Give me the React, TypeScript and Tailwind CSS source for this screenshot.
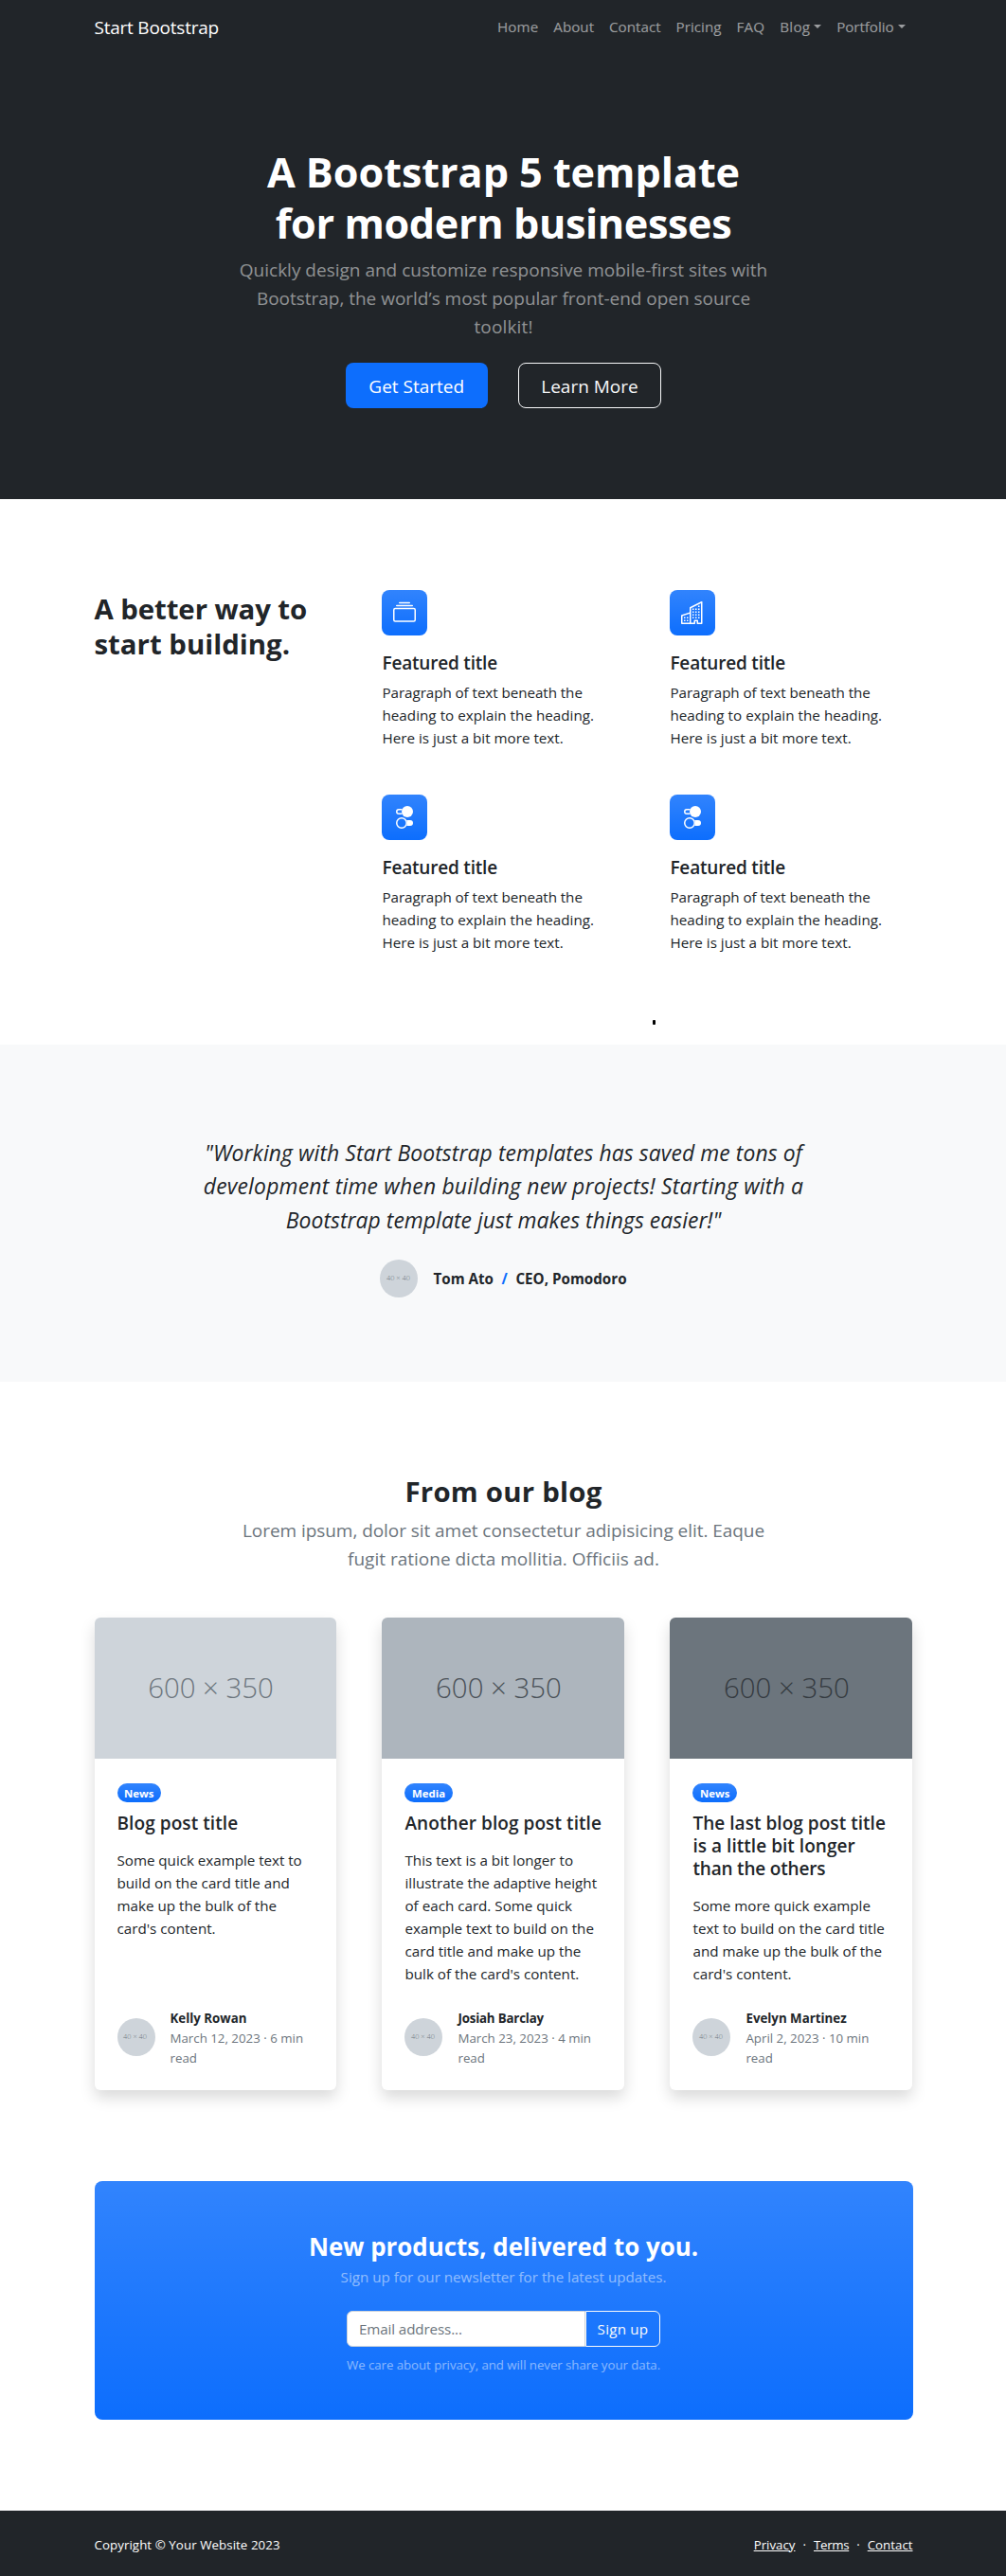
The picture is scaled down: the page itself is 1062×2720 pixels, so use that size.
import React from 'react';
import { BsCollection, BsToggles2 } from 'react-icons/bs';

type Line = [text: string, tracking?: string];

/** Copy set line by line, each with its own tracking. */
function Lines({ lines }: { lines: Line[] }) {
  return (
    <>
      {lines.map(([text, tracking = ''], i) => (
        <span key={i} className={`block whitespace-nowrap ${tracking}`}>
          {text}
        </span>
      ))}
    </>
  );
}

function BuildingIcon() {
  return (
    <svg viewBox="0 0 16 16" className="size-6" fill="currentColor" fillRule="evenodd">
      <path d="M14.763.075A.5.5 0 0 1 15 .5v15a.5.5 0 0 1-.5.5h-3a.5.5 0 0 1-.5-.5V14h-1v1.5a.5.5 0 0 1-.5.5h-9a.5.5 0 0 1-.5-.5V10a.5.5 0 0 1 .342-.474L6 7.64V4.5a.5.5 0 0 1 .276-.447l8-4a.5.5 0 0 1 .487.022zM6 8.694 1 10.36V15h5V8.694zM7 15h2v-1.5a.5.5 0 0 1 .5-.5h2a.5.5 0 0 1 .5.5V15h2V1.309l-7 3.5V15z" />
      <path d="M2 11h1v1H2v-1zm2 0h1v1H4v-1zm-2 2h1v1H2v-1zm2 0h1v1H4v-1zm4-4h1v1H8V9zm2 0h1v1h-1V9zm-2 2h1v1H8v-1zm2 0h1v1h-1v-1zm2-2h1v1h-1V9zm0 2h1v1h-1v-1zM8 7h1v1H8V7zm2 0h1v1h-1V7zm2 0h1v1h-1V7zM8 5h1v1H8V5zm2 0h1v1h-1V5zm2 0h1v1h-1V5zm0-2h1v1h-1V3z" />
    </svg>
  );
}

const navLinks: { label: string; menu?: boolean; tracking: string }[] = [
  { label: 'Home', tracking: 'tracking-[0.005em]' },
  { label: 'About', tracking: '' },
  { label: 'Contact', tracking: '' },
  { label: 'Pricing', tracking: '' },
  { label: 'FAQ', tracking: 'tracking-[0.012em]' },
  { label: 'Blog', menu: true, tracking: 'tracking-[0.015em]' },
  { label: 'Portfolio', menu: true, tracking: 'tracking-[-0.005em]' },
];

function Navbar() {
  return (
    <nav className="ml-[99.5px] flex h-14 w-[864px] items-center justify-between">
      <a href="#" className="pt-[1.5px] text-[19px] leading-[30px] tracking-[-0.012em] text-white">
        Start Bootstrap
      </a>
      <ul className="flex text-[15.2px] leading-6 text-white/55">
        {navLinks.map((l) => (
          <li key={l.label} className="flex items-center px-2">
            <span className={l.tracking}>{l.label}</span>
            {l.menu && (
              <span className="ml-1 border-x-[4.8px] border-t-[4.8px] border-x-transparent border-t-white/55" />
            )}
          </li>
        ))}
      </ul>
    </nav>
  );
}

function Hero() {
  return (
    <div className="ml-[99.5px] flex h-[471px] w-[864px] flex-col items-center pt-24 text-center">
      <h1 className="mb-2 pt-[2.5px] text-[43.2px] leading-[54.55px] font-bold text-white">
        <Lines
          lines={[
            ['A Bootstrap 5 template', 'tracking-[-0.001em]'],
            ['for modern businesses', 'tracking-[-0.009em]'],
          ]}
        />
      </h1>
      <p className="-mt-[1.5px] mb-[23px] text-[19px] leading-[30px] text-white/50">
        <Lines
          lines={[
            ['Quickly design and customize responsive mobile-first sites with'],
            ['Bootstrap, the world’s most popular front-end open source', 'tracking-[-0.001em]'],
            ['toolkit!', 'tracking-[0.008em]'],
          ]}
        />
      </p>
      <div className="flex gap-8 text-[19px] leading-[30px] text-white">
        <a href="#" className="h-12 w-[150px] rounded-lg bg-[#0d6efd] pt-2.5">
          Get Started
        </a>
        <a href="#" className="h-12 w-[151.5px] rounded-lg border border-[#f8f9fa] pt-[9px] text-[#f8f9fa]">
          Learn More
        </a>
      </div>
    </div>
  );
}

function Feature({ icon }: { icon: React.ReactNode }) {
  return (
    <div className="w-[255.98px]">
      <div className="mb-4 flex size-12 items-center justify-center rounded-lg bg-[#0d6efd] bg-linear-to-b from-white/15 to-white/0 text-white">
        {icon}
      </div>
      <h2 className="mb-[7px] pt-px text-[19px] leading-6 font-semibold tracking-[-0.01em]">Featured title</h2>
      <p className="text-[15.2px] leading-6">
        <Lines
          lines={[
            ['Paragraph of text beneath the', 'tracking-[-0.004em]'],
            ['heading to explain the heading.', 'tracking-[0.002em]'],
            ['Here is just a bit more text.'],
          ]}
        />
      </p>
    </div>
  );
}

function Features() {
  return (
    <section className="ml-[99.5px] flex h-[576px] w-[864px] gap-12 pt-24">
      <h2 className="w-[255.98px] pt-[1.5px] text-[29.4px] leading-[37.1px] font-bold">
        <Lines lines={[['A better way to', 'tracking-[-0.003em]'], ['start building.']]} />
      </h2>
      <div>
        <div className="flex w-[560px] flex-wrap gap-12">
          <Feature icon={<BsCollection className="size-6" />} />
          <Feature icon={<BuildingIcon />} />
          <Feature icon={<BsToggles2 className="size-6" />} />
          <Feature icon={<BsToggles2 className="size-6" />} />
        </div>
        <div className="mt-[70px] ml-[285.52px] h-[5px] w-[3px] rounded-[1px] bg-black" />
      </div>
    </section>
  );
}

function Avatar() {
  return (
    <div className="flex size-10 shrink-0 items-center justify-center rounded-full bg-[#ced4da] pr-[2px] text-[7.4px] leading-none font-light whitespace-nowrap text-[#6c757d]">
      40 × 40
    </div>
  );
}

function Testimonial() {
  return (
    <section className="h-[356px] bg-[#f8f9fa] pt-24">
      <div className="ml-[99.5px] flex w-[864px] flex-col items-center">
        <p className="mb-[23.5px] pt-px text-center text-[22.9px] leading-[35.46px] italic">
          <Lines
            lines={[
              ['"Working with Start Bootstrap templates has saved me tons of', 'tracking-[0.004em]'],
              ['development time when building new projects! Starting with a', 'tracking-[0.009em]'],
              ['Bootstrap template just makes things easier!"', 'tracking-[0.002em]'],
            ]}
          />
        </p>
        <div className="flex items-center gap-4">
          <Avatar />
          <div className="pt-px text-[15.2px] leading-6 font-bold whitespace-nowrap">
            Tom Ato
            <span className="mx-[8.6px] text-[#0d6efd]">/</span>
            CEO, Pomodoro
          </div>
        </div>
      </div>
    </section>
  );
}

interface Post {
  tone: string;
  tag: string;
  title: Line[];
  body: Line[];
  author: string;
  authorTracking: string;
  date: string;
}

const posts: Post[] = [
  {
    tone: 'bg-[#ced4da] text-[#6c757d]',
    tag: 'News',
    title: [['Blog post title', 'tracking-[0.004em]']],
    body: [
      ['Some quick example text to', 'tracking-[-0.002em]'],
      ['build on the card title and'],
      ['make up the bulk of the'],
      ["card's content."],
    ],
    author: 'Kelly Rowan',
    authorTracking: '',
    date: 'March 12, 2023 · 6 min',
  },
  {
    tone: 'bg-[#adb5bd] text-[#495057]',
    tag: 'Media',
    title: [['Another blog post title', 'tracking-[0.004em]']],
    body: [
      ['This text is a bit longer to'],
      ['illustrate the adaptive height'],
      ['of each card. Some quick'],
      ['example text to build on the'],
      ['card title and make up the'],
      ["bulk of the card's content."],
    ],
    author: 'Josiah Barclay',
    authorTracking: 'tracking-[-0.014em]',
    date: 'March 23, 2023 · 4 min',
  },
  {
    tone: 'bg-[#6c757d] text-[#343a40]',
    tag: 'News',
    title: [
      ['The last blog post title', 'tracking-[0.002em]'],
      ['is a little bit longer', 'tracking-[0.002em]'],
      ['than the others', 'tracking-[-0.01em]'],
    ],
    body: [
      ['Some more quick example', 'tracking-[-0.002em]'],
      ['text to build on the card title', 'tracking-[0.003em]'],
      ['and make up the bulk of the'],
      ["card's content."],
    ],
    author: 'Evelyn Martinez',
    authorTracking: '',
    date: 'April 2, 2023 · 10 min',
  },
];

function PostCard({ post }: { post: Post }) {
  return (
    <article className="flex h-[499px] w-[255.98px] flex-col rounded-md bg-white shadow-[0_8px_16px_rgba(0,0,0,0.15)]">
      <div
        className={`flex h-[149.3px] items-center justify-center rounded-t-md pr-2.5 text-[29.4px] font-light whitespace-nowrap ${post.tone}`}
      >
        600 × 350
      </div>
      <div className="flex flex-1 flex-col items-start px-6 pt-[26.5px] pb-6">
        <span className="mb-2 h-[19.8px] rounded-full bg-[#0d6efd] bg-linear-to-b from-white/15 to-white/0 px-[7.6px] pt-[4.8px] text-[11.4px] leading-3 font-bold text-white">
          {post.tag}
        </span>
        <h3 className="mb-[14.5px] pt-[1.5px] text-[19px] leading-6 font-semibold">
          <Lines lines={post.title} />
        </h3>
        <p className="pt-[0.6px] text-[15.2px] leading-6">
          <Lines lines={post.body} />
        </p>
        <div className="mt-auto flex items-center gap-4 text-[13.3px] leading-[21px]">
          <div className="pt-px">
            <Avatar />
          </div>
          <div className="-mb-px pt-0.5">
            <div className={`font-bold whitespace-nowrap ${post.authorTracking}`}>{post.author}</div>
            <div className="text-[#6c757d]">
              <Lines lines={[[post.date], ['read']]} />
            </div>
          </div>
        </div>
      </div>
    </article>
  );
}

function Blog() {
  return (
    <section className="ml-[99.5px] w-[864px] pt-24 pb-24">
      <div className="mb-[47px] text-center">
        <h2 className="mb-[7px] pt-[1.5px] text-[29.4px] leading-[37.1px] font-bold tracking-[0.008em]">
          From our blog
        </h2>
        <p className="text-[19px] leading-[30px] text-[#6c757d]">
          <Lines
            lines={[
              ['Lorem ipsum, dolor sit amet consectetur adipisicing elit. Eaque', 'tracking-[-0.003em]'],
              ['fugit ratione dicta mollitia. Officiis ad.'],
            ]}
          />
        </p>
      </div>
      <div className="flex gap-12">
        {posts.map((p) => (
          <PostCard key={p.author} post={p} />
        ))}
      </div>
      <aside className="mt-24 flex h-[252px] flex-col items-center rounded-lg bg-[#0d6efd] bg-linear-to-b from-white/15 to-white/0 pt-12">
        <h2 className="pt-px text-[25.9px] leading-[40px] font-bold whitespace-nowrap text-white">
          New products, delivered to you.
        </h2>
        <p className="mb-[23.5px] pt-[0.5px] text-[15.2px] leading-6 whitespace-nowrap text-white/50">
          Sign up for our newsletter for the latest updates.
        </p>
        <div className="mb-2 flex h-[38px] w-[331px] text-[15.2px] leading-6">
          <input
            type="text"
            placeholder="Email address..."
            className="min-w-0 flex-1 rounded-l-md border border-[#ced4da] bg-white px-3 tracking-[-0.008em] outline-none placeholder:text-[#6c757d]"
          />
          <button className="w-[79px] rounded-r-md border border-[#f8f9fa] tracking-[0.014em] whitespace-nowrap text-[#f8f9fa]">
            Sign up
          </button>
        </div>
        <p className="pt-px text-[13.3px] leading-[21px] tracking-[-0.005em] whitespace-nowrap text-white/50">
          We care about privacy, and will never share your data.
        </p>
      </aside>
    </section>
  );
}

function Footer() {
  return (
    <footer className="h-[69px] bg-[#212529] pt-6 text-[13.3px] leading-[21px] text-white">
      <div className="ml-[99.5px] flex w-[864px] justify-between pt-0.5">
        <div className="tracking-[0.005em]">Copyright © Your Website 2023</div>
        <div className="flex">
          <a href="#" className="underline">
            Privacy
          </a>
          <span className="mx-[8px]">·</span>
          <a href="#" className="tracking-[-0.025em] underline">
            Terms
          </a>
          <span className="mx-[8px]">·</span>
          <a href="#" className="underline">
            Contact
          </a>
        </div>
      </div>
    </footer>
  );
}

export default function App() {
  return (
    <div className="h-[2720px] overflow-hidden bg-white font-['Open_Sans','Noto_Sans',sans-serif] text-[#212529]">
      <header className="bg-[#212529]">
        <Navbar />
        <Hero />
      </header>
      <Features />
      <Testimonial />
      <Blog />
      <Footer />
    </div>
  );
}
